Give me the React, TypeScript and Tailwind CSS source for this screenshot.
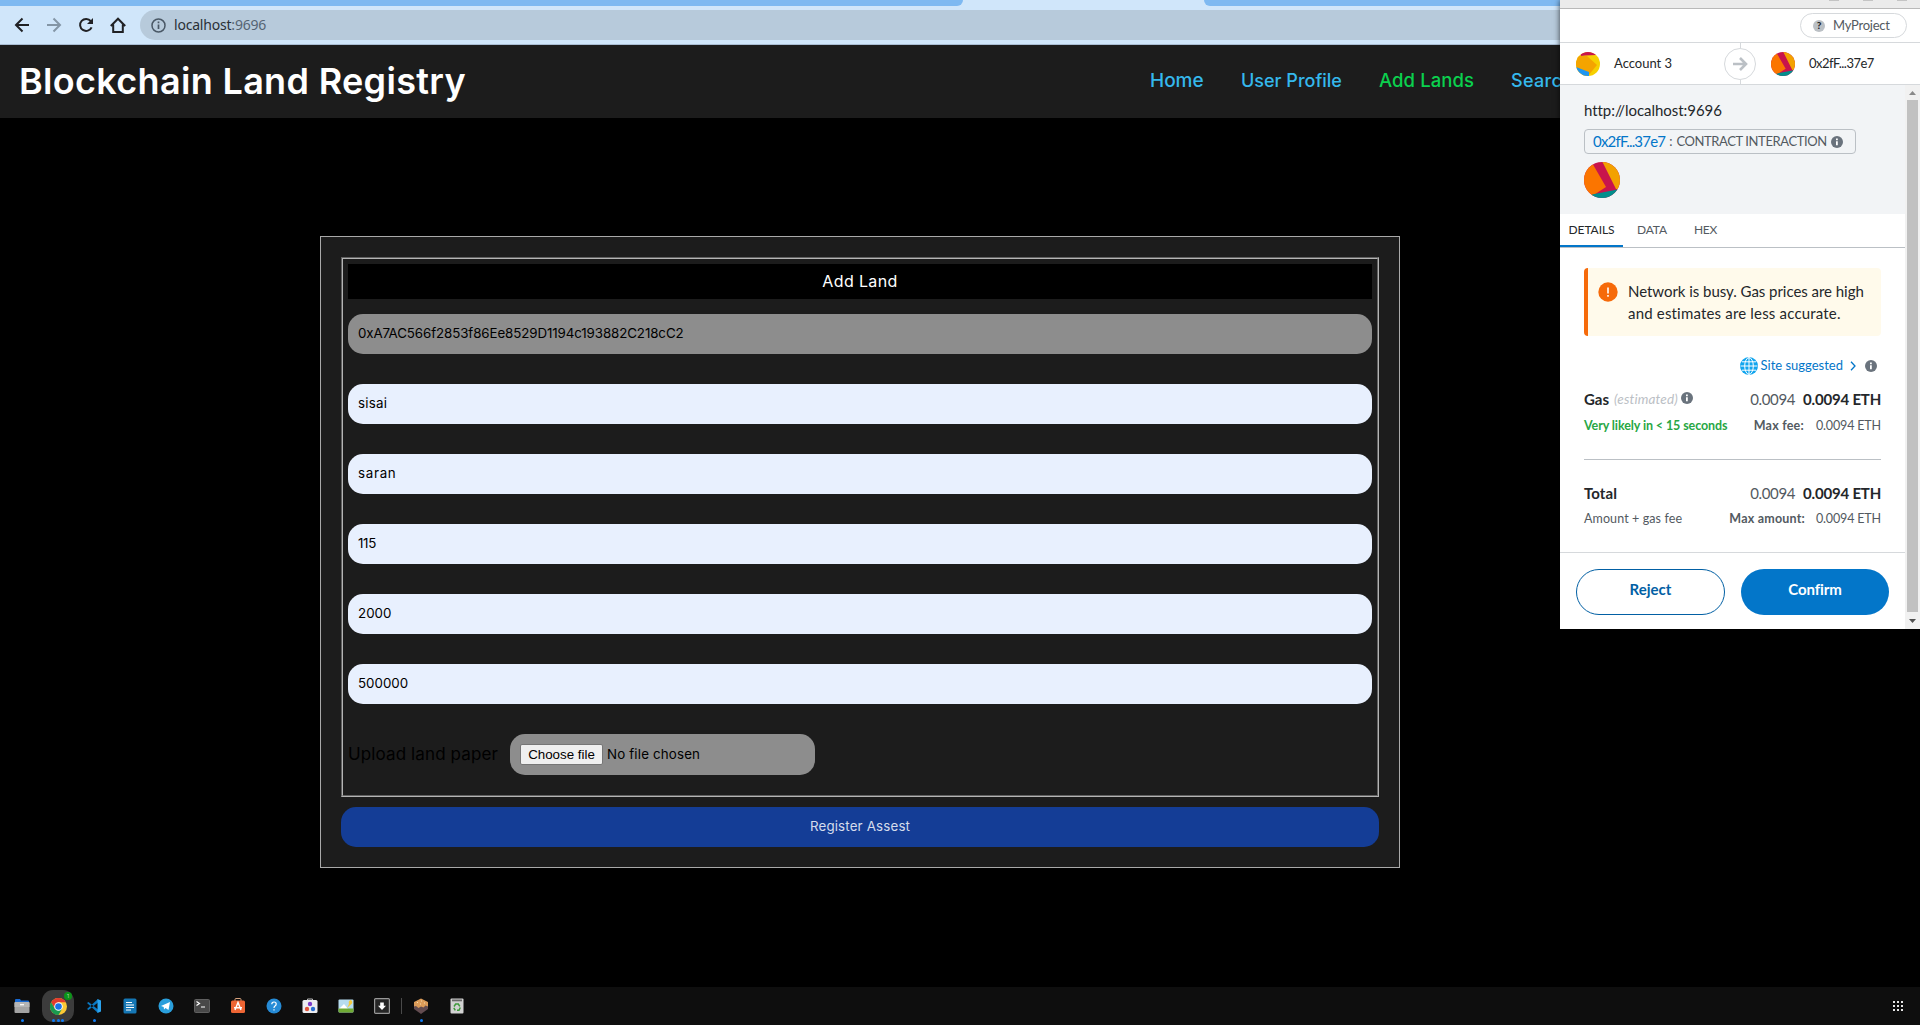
import type { ReactNode } from "react";

const inter = "font-['Inter',sans-serif]";
const lato = "font-['Lato',sans-serif]";

function BrowserBar() {
  return (
    <div className="h-[45px] bg-[#d0e6fa]">
      <div className="flex h-[6px] justify-between">
        <div className="w-[963px] rounded-br-[6px] bg-[#7eb9f1]" />
        <div className="w-[716px] rounded-bl-[6px] bg-[#7eb9f1]" />
      </div>
      <div className="flex h-[39px] items-center border-b border-[#a9bdd3]">
        <div className="flex w-[140px] shrink-0 items-center gap-4 pl-[14px]">
          <svg width="16" height="16" viewBox="0 0 16 16" fill="none" stroke="#202124" strokeWidth="2"><path d="M15 8H2.5M8.5 1.5 2 8l6.5 6.5" /></svg>
          <svg width="16" height="16" viewBox="0 0 16 16" fill="none" stroke="#8496a6" strokeWidth="2"><path d="M1 8h12.5M7.500 1.500 14 8l-6.500 6.500" /></svg>
          <svg width="16" height="16" viewBox="0 0 16 16" fill="none" stroke="#202124" strokeWidth="2"><path d="M13.600 10.300A6 6 0 1 1 12.800 4.200" /><path d="M15 1v6H9z" fill="#202124" stroke="none" /></svg>
          <svg width="16" height="16" viewBox="0 0 16 16" fill="none" stroke="#202124" strokeWidth="2"><path d="M.8 9 8 1.700 15.200 9M3.200 7.500V15h9.600V7.500" /></svg>
        </div>
        <div className="flex h-[30px] flex-1 items-center rounded-l-full bg-[#b7cadb] pl-[11px]">
          <svg width="15" height="15" viewBox="0 0 15 15" fill="none" stroke="#4a5866" strokeWidth="1.500"><circle cx="7.500" cy="7.500" r="6.500" /><path d="M7.500 6.500v4.500M7.500 3.600v1.700" strokeWidth="1.700" /></svg>
          <span className="ml-2 text-[14px] leading-none tracking-[-0.2px] text-[#2a3036] font-['Noto_Sans',sans-serif]">
            localhost<span className="text-[#556473]">:9696</span>
          </span>
        </div>
      </div>
    </div>
  );
}

function Navbar() {
  return (
    <header className={`flex h-[73px] items-center bg-[#1c1c1c] ${inter}`}>
      <h1 className="pb-px pl-[19px] text-[36px] font-semibold leading-none tracking-[0.32px] whitespace-nowrap text-white">Blockchain Land Registry</h1>
      <nav className="ml-auto flex w-[771px] items-baseline gap-[37px] overflow-hidden text-[18px] font-medium whitespace-nowrap text-[#35b8ec]">
        <a className="w-[55px] shrink-0 pl-px text-[19px]">Home</a>
        <a className="w-[101px] shrink-0">User Profile</a>
        <a className="w-[95px] shrink-0 text-[18.5px] tracking-[0.1px] text-[#0bd04e]">Add Lands</a>
        <a className="shrink-0 tracking-[0.3px]">Search Lands</a>
      </nav>
    </header>
  );
}

const fields = [
  { value: "sisai", cls: "tracking-[0.25px]" },
  { value: "saran", cls: "tracking-[0.7px]" },
  { value: "115", cls: "tracking-[-0.3px]" },
  { value: "2000", cls: "tracking-[0px]" },
  { value: "500000", cls: "tracking-[0px]" },
];

function LandForm() {
  return (
    <form className={`ml-[320px] mt-[118px] h-[632px] w-[1080px] border border-[#a9a9a9] bg-[#1c1c1c] p-5 ${inter}`}>
      <div className="h-[540px] border-2 border-[#b4b4b4] px-[5px] pt-[5px] [border-style:groove]">
        <div className="flex h-[35px] items-center justify-center bg-black pb-[2px] text-[16px] tracking-[0.37px] text-white">Add Land</div>
        <div className="mt-[15px] flex h-10 items-center rounded-[15px] bg-[#8d8d8d] px-[10px] text-[13.33px] tracking-[-0.1px] text-black">
          0xA7AC566f2853f86Ee8529D1194c193882C218cC2
        </div>
        {fields.map((f) => (
          <div key={f.value} className={`mt-[30px] flex h-10 items-center rounded-[15px] bg-[#e8f0fe] px-[10px] text-[13.33px] text-black ${f.cls}`}>
            {f.value}
          </div>
        ))}
        <div className="mt-[30px] flex h-[41px] items-center">
          <span className="w-[162px] text-[17px] tracking-[0.12px] whitespace-nowrap text-black">Upload land paper</span>
          <div className="flex h-full w-[305px] items-center rounded-[15px] bg-[#8d8d8d] pl-[10px]">
            <span className="flex h-[21px] w-[83px] items-center justify-center rounded-[2px] border border-[#767676] bg-[#efefef] text-[13.33px] whitespace-nowrap text-black font-['Liberation_Sans',sans-serif]">Choose file</span>
            <span className="ml-1 text-[13.33px] tracking-[0.16px] text-black">No file chosen</span>
          </div>
        </div>
      </div>
      <div className="mt-[10px] flex h-10 items-center justify-center rounded-[15px] bg-[#143d96] text-[13.33px] tracking-[0.16px] text-[#d5dcec]">Register Assest</div>
    </form>
  );
}

function InfoDot() {
  return (
    <svg width="12" height="12" viewBox="0 0 12 12" className="shrink-0">
      <circle cx="6" cy="6" r="6" fill="#6a737d" />
      <path d="M5 5.200h1.800v4H5zM5 2.500h1.800v1.700H5z" fill="#fff" />
    </svg>
  );
}

function ContractAvatar({ size }: { size: number }) {
  return (
    <svg width={size} height={size} viewBox="0 0 36 36" className="shrink-0 rounded-full">
      <path d="M0 0h36v36H0z" fill="#c8144c" />
      <path d="M18.500 0H36v27h-4z" fill="#f3a100" />
      <path d="M9 2.500 0 0v36h5l17-11z" fill="#fb7500" />
      <path d="M8 32.500 36 27v9H8z" fill="#018e8c" />
    </svg>
  );
}

function AccountAvatar() {
  return (
    <svg width="24" height="24" viewBox="0 0 24 24" className="shrink-0 rounded-full">
      <path d="M0 0h24v24H0z" fill="#f6d000" />
      <path d="M0 4h11l10 9-9 11H0z" fill="#f4a400" />
      <path d="M4 0h16v3L9 3.500 5 4z" fill="#c8144c" />
      <path d="m0 15 13 5v4H0z" fill="#1e96f2" />
    </svg>
  );
}

function PriceRow({ label, className }: { label: ReactNode; className: string }) {
  return (
    <div className={`flex h-5 items-center text-[15px] text-[#24272a] ${className}`}>
      {label}
      <span className="ml-auto pt-[2px] tracking-[-0.35px] text-[#535a61]">0.0094</span>
      <span className="ml-2 pt-[2px] font-bold tracking-[-0.2px]">0.0094 ETH</span>
    </div>
  );
}

function WalletPopup() {
  return (
    <aside className={`absolute right-0 top-0 flex h-[629px] w-[360px] flex-col overflow-visible bg-white whitespace-nowrap text-[#24272a] shadow-[0_0_6px_rgba(0,0,0,0.7)] ${lato}`}>
      <div className="flex h-[9px] items-start justify-end gap-[24px] border-b border-[#b9b9b9] bg-[#ebebeb] pr-[13px]">
        <i className="h-[1px] w-[10px] bg-[#c4c4c4]" />
        <i className="h-[1px] w-[10px] bg-[#c4c4c4]" />
        <i className="h-[1px] w-[10px] bg-[#c4c4c4]" />
      </div>
      <div className="flex h-[34px] items-center justify-end border-b border-[#d6d9dc] pr-[13px]">
        <div className="flex h-[25px] w-[107px] items-center rounded-full border border-[#d6d9dc] pl-3 text-[13px] tracking-[-0.23px] text-[#535a61]">
          <span className="mr-[8px] flex size-3 items-center justify-center rounded-full bg-[#bbc0c5] text-[10px] font-black text-[#24272a]">?</span>
          <span>MyProject</span>
        </div>
      </div>
      <div className="flex h-[42px] border-b border-[#d6d9dc] text-[13px]">
        <div className="flex w-[164px] items-center pl-4"><AccountAvatar /><span className="ml-[14px]">Account 3</span></div>
        <div className="flex flex-col items-center">
          <div className="w-px flex-1 bg-[#d6d9dc]" />
          <div className="flex size-8 items-center justify-center rounded-full border border-[#d6d9dc]">
            <svg width="16" height="14" viewBox="0 0 16 14" fill="none" stroke="#bbc0c5" strokeWidth="2.600"><path d="M1 7h12.500M8 1l6 6-6 6" /></svg>
          </div>
          <div className="w-px flex-1 bg-[#d6d9dc]" />
        </div>
        <div className="flex items-center pl-[15px]"><ContractAvatar size={24} /><span className="ml-[14px] tracking-[-0.5px]">0x2fF...37e7</span></div>
      </div>
      <div className="flex h-[544px]">
        <div className="w-[345px]">
          <div className="h-[129px] bg-[#f2f4f6] pl-6 pt-[15px]">
            <div className="h-5 text-[15px] leading-5 tracking-[-0.05px]">http://localhost:9696</div>
            <div className="mt-[9px] flex h-[25px] w-[272px] items-center rounded-[4px] border border-[#bbc0c5] pl-2 text-[#535a61]">
              <span className="text-[15px] tracking-[-0.8px] text-[#0376c9]">0x2fF...37e7</span>
              <span className="ml-[4px] mr-[4px] text-[13px]">:</span>
              <span className="mr-[4px] text-[13px] tracking-[-0.4px]">CONTRACT INTERACTION</span>
              <InfoDot />
            </div>
            <div className="mt-2"><ContractAvatar size={36} /></div>
          </div>
          <div className="flex h-[34px] border-b border-[#bbc0c5] text-[12px] text-[#535a61]">
            <div className="flex h-[33px] w-[63px] items-center justify-center border-b-2 border-[#0376c9] tracking-[-0.08px] text-[#24272a]">DETAILS</div>
            <div className="flex h-[33px] items-center pb-[2px] pl-[14px] tracking-[-0.15px]">DATA</div>
            <div className="flex h-[33px] items-center pb-[2px] pl-[27px] tracking-[-0.3px]">HEX</div>
          </div>
          <div className="pl-6 pr-6">
            <div className="mt-5 flex h-[68px] rounded-[4px] border-l-4 border-[#f66a0a] bg-[#fffaeb] pl-[10px] pt-[11px]">
              <svg width="20" height="20" viewBox="0 0 20 20" className="mt-[3px] shrink-0">
                <circle cx="10" cy="10" r="9.700" fill="#f66a0a" />
                <path d="M9.200 5.500h1.600v6H9.200zM9.200 13h1.600v1.700H9.200z" fill="#fff" />
              </svg>
              <p className="ml-[10px] pt-px text-[15px] leading-[22px] tracking-[-0.04px]">Network is busy. Gas prices are high<br /><span className="tracking-[0.18px]">and estimates are less accurate.</span></p>
            </div>
            <div className="mt-5 flex h-5 items-center justify-end pr-[4px] text-[13px] text-[#0376c9]">
              <svg width="18" height="18" viewBox="0 0 18 18" fill="none" stroke="#fff" strokeWidth="1" className="mr-[3px]">
                <circle cx="9" cy="9" r="9" fill="#12a5ee" stroke="none" />
                <ellipse cx="9" cy="9" rx="4.300" ry="8.300" /><path d="M9 0v18M.5 9h17M2 4.800h14M2 13.200h14" />
              </svg>
              <span className="pb-px">Site suggested</span>
              <svg width="6" height="10" viewBox="0 0 6 10" fill="none" stroke="#0376c9" strokeWidth="1.300" className="ml-[7px] mr-[9px]"><path d="m1 .8 4 4.200-4 4.200" /></svg>
              <InfoDot />
            </div>
            <PriceRow className="mt-3" label={<><b className="pt-[2px]">Gas</b><i className="ml-[5px] mr-[3px] pt-[2px] text-[13.5px] tracking-[0.15px] text-[#bbc0c5]">(estimated)</i><InfoDot /></>} />
            <div className="mt-2 flex h-5 items-center pt-px text-[12.5px] text-[#535a61]">
              <b className="tracking-[-0.1px] text-[#28a745]">Very likely in &lt; 15 seconds</b>
              <b className="ml-auto tracking-[0.22px]">Max fee:</b>
              <span className="ml-3 tracking-[-0.15px]">0.0094 ETH</span>
            </div>
            <div className="mt-[23px] h-px bg-[#bbc0c5]" />
            <PriceRow className="mt-[22px]" label={<b className="pt-[2px] tracking-[0.1px]">Total</b>} />
            <div className="mt-[7px] flex h-5 items-center pt-px text-[12.5px] text-[#535a61]">
              <span className="tracking-[0.1px]">Amount + gas fee</span>
              <b className="ml-auto tracking-[0.2px]">Max amount:</b>
              <span className="ml-[11px] tracking-[-0.15px]">0.0094 ETH</span>
            </div>
          </div>
          <div className="mt-[23px] flex gap-4 border-t border-[#d6d9dc] pl-4 pt-4 text-[15px] font-bold">
            <div className="flex h-[46px] w-[149px] items-center justify-center rounded-full border border-[#0260a4] pb-[5px] text-[#0260a4]">Reject</div>
            <div className="flex h-[46px] w-[148px] items-center justify-center rounded-full bg-[#0376c9] pb-[5px] tracking-[-0.1px] text-white">Confirm</div>
          </div>
        </div>
        <div className="flex w-[15px] flex-col items-center bg-[#f1f1f1]">
          <svg width="7" height="15" viewBox="0 0 7 15"><path d="M0 10h7L3.500 6z" fill="#8a8a8a" /></svg>
          <div className="w-[11px] flex-1 bg-[#c1c1c1]" />
          <svg width="7" height="17" viewBox="0 0 7 17"><path d="M0 7h7l-3.500 4z" fill="#505050" /></svg>
        </div>
      </div>
    </aside>
  );
}

const FilesIcon = () => (
  <svg width="16" height="16" viewBox="0 0 16 16"><path d="M1 2q0-1 1-1h4l1 1.500h7q1 0 1 1V8H1z" fill="#1769d2" /><rect x=".5" y="4" width="15" height="11" rx="1" fill="#a3a3a3" /><path d="M.5 5q0-1 1-1h13q1 0 1 1v4H.5z" fill="#b5b5b5" /><path d="M6 6.700h4" stroke="#fff" strokeWidth="1.200" /></svg>
);
const ChromeIcon = () => (
  <svg width="17" height="17" viewBox="0 0 48 48"><circle cx="24" cy="24" r="24" fill="#fcc934" /><path d="M3.200 12A24 24 0 0 1 44.800 12H24L13.600 30z" fill="#e33b2e" /><path d="M3.200 12A24 24 0 0 0 24 48l10.400-18-20.800 0z" fill="#1a9a50" /><circle cx="24" cy="24" r="12" fill="#fff" /><circle cx="24" cy="24" r="9.300" fill="#1a73e8" /></svg>
);
const CodeIcon = () => (
  <svg width="16" height="16" viewBox="0 0 16 16"><path d="m1 5 1.500-1L12 11.500V15zM1 11l1.500 1L12 4.500V1z" fill="#0a78c2" /><path d="M11.500 1 15 2.600v10.800L11.500 15z" fill="#2ba3ee" /></svg>
);
const DocIcon = () => (
  <svg width="14" height="16" viewBox="0 0 14 16"><rect x=".5" y=".5" width="13" height="15" rx="1.500" fill="#1577b5" /><path d="M3 4.500h6M3 7h8M3 9.500h8M3 12h5" stroke="#fff" strokeWidth="1.200" /></svg>
);
const TelegramIcon = () => (
  <svg width="16" height="16" viewBox="0 0 16 16"><circle cx="8" cy="8" r="7.500" fill="#2a9fdc" /><path d="m3 8 9-4-1.500 8-3-2-1.500 1.500L5.700 9z" fill="#fff" /></svg>
);
const TerminalIcon = () => (
  <svg width="16" height="16" viewBox="0 0 16 16"><rect x=".5" y="1.500" width="15" height="13" rx="1" fill="#484848" stroke="#5f5f5f" /><path d="m2.500 3.500 3 2-3 2M7 9h4" fill="none" stroke="#fff" strokeWidth="1.200" /></svg>
);
const StoreIcon = () => (
  <svg width="16" height="16" viewBox="0 0 16 16"><path d="M5 3V1.500q0-1 1-1h4q1 0 1 1V3" fill="none" stroke="#d9a27d" /><rect x="1" y="2.500" width="14" height="12.500" rx="1.500" fill="#ee6534" /><path d="m5 12 3-7.500L11 12M4 9.800h8" fill="none" stroke="#fff" strokeWidth="1.400" /></svg>
);
const HelpIcon = () => (
  <svg width="16" height="16" viewBox="0 0 16 16"><circle cx="8" cy="8" r="7.500" fill="#268bd6" /><path d="M5.800 6.200q0-2.200 2.200-2.200t2.200 1.900q0 1.200-1.200 2T8 10M8 11.300v1.300" fill="none" stroke="#fff" strokeWidth="1.200" /></svg>
);
const CardsIcon = () => (
  <svg width="16" height="16" viewBox="0 0 16 16"><path d="M5.500 2.500V1h5v1.500" fill="none" stroke="#bbb" /><rect x=".5" y="2" width="15" height="13" rx="1.500" fill="#ededf0" /><circle cx="8" cy="6" r="2.200" fill="#7d3bc8" /><circle cx="5" cy="11" r="2.200" fill="#e2553b" /><circle cx="11" cy="11" r="2.200" fill="#2a6fd0" /></svg>
);
const MapIcon = () => (
  <svg width="16" height="16" viewBox="0 0 16 16"><rect x=".5" y="1.500" width="15" height="13" rx="1" fill="#b6dcef" /><path d="m1 11 5-5 4 5z" fill="#fff" /><path d="M.5 10.500h15v3q0 1-1 1h-13q-1 0-1-1z" fill="#6faa34" /><path d="m9 10 2-4q-1-3 1.500-4Q15 3 14 5.500z" fill="#f4ca3e" /></svg>
);
const DownloadIcon = () => (
  <svg width="16" height="16" viewBox="0 0 16 16"><rect x=".6" y=".6" width="14.800" height="14.800" rx="1" fill="#262626" stroke="#989898" strokeWidth="1.200" /><path d="M6.200 4.500h3.600v3.300H12L8 12 4 7.800h2.200z" fill="#fff" /></svg>
);
const CakeIcon = () => (
  <svg width="16" height="16" viewBox="0 0 16 16"><path d="M1 6h14v5l-7 5-7-5z" fill="#634c50" /><path d="m8 .5 7 3.500v4.500l-2.500-1-2 2-2.500-1-2.500 1.500L3 8 1 8.500V4z" fill="#dc9c59" /><path d="M4 4.500h1M8 3h1M11 5h1M7 6h1" stroke="#f7dcae" /></svg>
);
const TrashIcon = () => (
  <svg width="14" height="16" viewBox="0 0 14 16"><rect x=".5" y=".5" width="13" height="15" rx="1" fill="#d2d2d2" /><path d="M2 1.500h10v1.800H2z" fill="#686868" /><path d="M4 8.500 5.700 6h2.600l1.500 2.300M10.300 9.500 9 12.300H7M5.300 12.300 3.800 9.800" fill="none" stroke="#3d993a" strokeWidth="1.500" /></svg>
);

function Dock({ children, dots = 0, active = false }: { children: ReactNode; dots?: number; active?: boolean }) {
  return (
    <div className="relative flex h-[38px] w-9 items-center justify-center">
      {active && <div className="absolute left-[2px] top-[3px] h-8 w-8 rounded-[11px] bg-[#3c3c3c]" />}
      <div className="relative">{children}</div>
      {active && <div className="absolute left-[24px] top-[5px] flex size-2 items-center justify-center rounded-full bg-[#0c9418] text-[5px] leading-none text-[#b5dfb8]">1</div>}
      <div className="absolute inset-x-0 bottom-[3px] flex justify-center gap-[1.5px]">
        {Array.from({ length: dots }, (_, i) => <i key={i} className="size-[3px] rounded-full bg-[#0f7cf5]" />)}
      </div>
    </div>
  );
}

function Taskbar() {
  return (
    <footer className={`flex h-[38px] items-center bg-[#0e0e0e] pl-1 ${inter}`}>
      <Dock dots={1}><FilesIcon /></Dock>
      <Dock dots={3} active><ChromeIcon /></Dock>
      <Dock dots={1}><CodeIcon /></Dock>
      <Dock><DocIcon /></Dock>
      <Dock><TelegramIcon /></Dock>
      <Dock><TerminalIcon /></Dock>
      <Dock><StoreIcon /></Dock>
      <Dock><HelpIcon /></Dock>
      <Dock><CardsIcon /></Dock>
      <Dock><MapIcon /></Dock>
      <Dock><DownloadIcon /></Dock>
      <div className="ml-px mr-px h-4 w-px bg-[#4a4a4a]" />
      <Dock dots={1}><CakeIcon /></Dock>
      <Dock><TrashIcon /></Dock>
      <div className="ml-auto mr-[17px] grid grid-cols-3 gap-[2px]">
        {Array.from({ length: 9 }, (_, i) => <i key={i} className="size-[2px] bg-[#e6e6e6]" />)}
      </div>
    </footer>
  );
}

export default function App() {
  return (
    <div className="relative flex h-[1025px] w-[1920px] flex-col overflow-hidden bg-black">
      <BrowserBar />
      <Navbar />
      <main className="flex-1"><LandForm /></main>
      <Taskbar />
      <WalletPopup />
    </div>
  );
}
